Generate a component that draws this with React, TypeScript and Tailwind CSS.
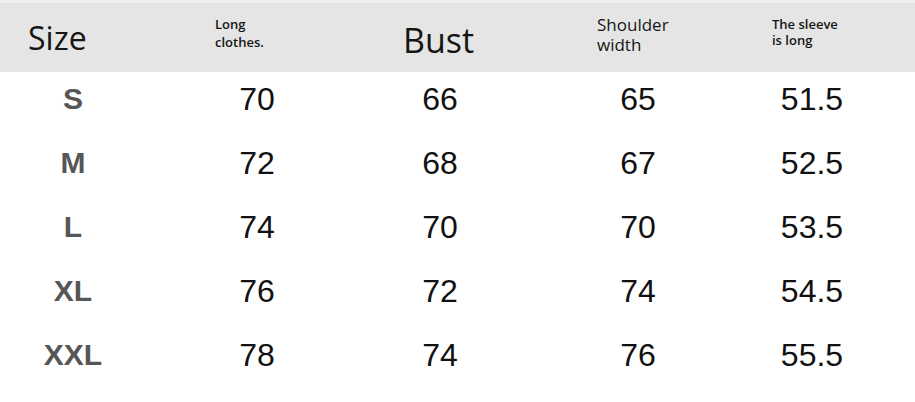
import React from "react";

const rows: [string, string, string, string, string][] = [
  ["S", "70", "66", "65", "51.5"],
  ["M", "72", "68", "67", "52.5"],
  ["L", "74", "70", "70", "53.5"],
  ["XL", "76", "72", "74", "54.5"],
  ["XXL", "78", "74", "76", "55.5"],
];

export default function App() {
  const head = { fontFamily: '"Open Sans", "Noto Sans", sans-serif' };
  const body = { fontFamily: '"Liberation Sans", Arial, sans-serif' };
  return (
    <div className="w-[915px] h-[402px] bg-white overflow-hidden">
      <div className="h-[3px] bg-[#efefef]" />
      <div className="h-[69px] bg-[#e5e5e5] flex items-start text-[#151515]" style={head}>
        <div className="w-[215px] pl-[28px] mt-[19px] text-[32px] leading-[32px]">Size</div>
        <div className="w-[188px] mt-[12px] text-[13px] leading-[18px] font-semibold">
          <div>Long</div>
          <div>clothes.</div>
        </div>
        <div className="w-[194px] mt-[20px] text-[34px] leading-[34px]">Bust</div>
        <div className="w-[175px] mt-[12px] text-[17px] leading-[20px] font-medium">
          <div>Shoulder</div>
          <div>width</div>
        </div>
        <div className="flex-1 mt-[13px] text-[13px] leading-[16px] font-semibold">
          <div>The sleeve</div>
          <div>is long</div>
        </div>
      </div>
      <div style={body}>
        {rows.map((r) => (
          <div
            key={r[0]}
            className="grid grid-cols-[146px_222px_144px_252px_96px] h-[64px] items-start text-center"
          >
            <div className="text-[30px] leading-[54px] font-bold text-[#565656]">{r[0]}</div>
            <div className="text-[32px] leading-[54px] text-[#111]">{r[1]}</div>
            <div className="text-[32px] leading-[54px] text-[#111]">{r[2]}</div>
            <div className="text-[32px] leading-[54px] text-[#111]">{r[3]}</div>
            <div className="text-[32px] leading-[54px] text-[#111]">{r[4]}</div>
          </div>
        ))}
      </div>
    </div>
  );
}
